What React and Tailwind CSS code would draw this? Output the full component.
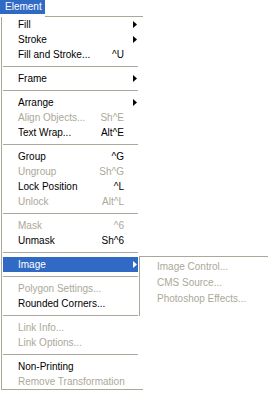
import React from "react";

const GRAY = "#aca899";

function Arrow({ white }) {
  return (
    <svg width="4" height="7" viewBox="0 0 4 7" className="block">
      <polygon points="0,0 4,3.5 0,7" fill={white ? "#ffffff" : "#000000"} />
    </svg>
  );
}

function Item({ label, shortcut, sub, disabled, active }) {
  const color = active ? "text-white" : disabled ? "text-[#aca899]" : "text-black";
  return (
    <div
      className={`flex items-center h-[15px] ml-[1px] w-[135px] pl-[15px] ${active ? "bg-[#316ac5]" : ""} ${color}`}
    >
      <span className="flex-1 whitespace-nowrap leading-none">{label}</span>
      <span className="whitespace-nowrap leading-none">{shortcut}</span>
      <span className="w-[14px] flex items-center pl-[9px]">{sub ? <Arrow white={active} /> : null}</span>
    </div>
  );
}

function Sep() {
  return (
    <div className="flex items-center h-[9px] ml-[1px] w-[135px]">
      <div className="h-px w-full bg-[#aca899]" />
    </div>
  );
}

function SubItem({ label }) {
  return (
    <div className="flex items-center h-[16px] pl-[17px] text-[#aca899] whitespace-nowrap leading-none">
      {label}
    </div>
  );
}

export default function App() {
  return (
    <div
      className="relative w-[268px] h-[399px] bg-white text-[10px] overflow-hidden"
      style={{ fontFamily: '"Liberation Sans", Arial, sans-serif' }}
    >
      <div className="flex items-center w-[45px] h-[14px] bg-[#316ac5] text-white pl-[5px] leading-none">
        Element
      </div>
      <div className="mt-[2px] flex flex-col w-[143px]">
        <div className="flex h-px">
          <div className="w-[45px]" />
          <div className="flex-1 bg-[#aca899]" />
        </div>
        <div className="flex flex-col ml-[1px] border-l border-b border-[#aca899] pb-0">
          <Item label="Fill" sub />
          <Item label="Stroke" sub />
          <Item label="Fill and Stroke..." shortcut="^U" />
          <Sep />
          <Item label="Frame" sub />
          <Sep />
          <Item label="Arrange" sub />
          <Item label="Align Objects..." shortcut="Sh^E" disabled />
          <Item label="Text Wrap..." shortcut="Alt^E" />
          <Sep />
          <Item label="Group" shortcut="^G" />
          <Item label="Ungroup" shortcut="Sh^G" disabled />
          <Item label="Lock Position" shortcut="^L" />
          <Item label="Unlock" shortcut="Alt^L" disabled />
          <Sep />
          <Item label="Mask" shortcut="^6" disabled />
          <Item label="Unmask" shortcut="Sh^6" />
          <Sep />
          <Item label="Image" sub active />
          <Sep />
          <Item label="Polygon Settings..." disabled />
          <Item label="Rounded Corners..." />
          <Sep />
          <Item label="Link Info..." disabled />
          <Item label="Link Options..." disabled />
          <Sep />
          <Item label="Non-Printing" />
          <Item label="Remove Transformation" disabled />
        </div>
      </div>
      <div className="absolute left-[139px] top-[256px] w-[129px] h-[60px] bg-white border-t border-l border-[#aca899] pt-[2px]">
        <SubItem label="Image Control..." />
        <SubItem label="CMS Source..." />
        <SubItem label="Photoshop Effects..." />
      </div>
    </div>
  );
}
